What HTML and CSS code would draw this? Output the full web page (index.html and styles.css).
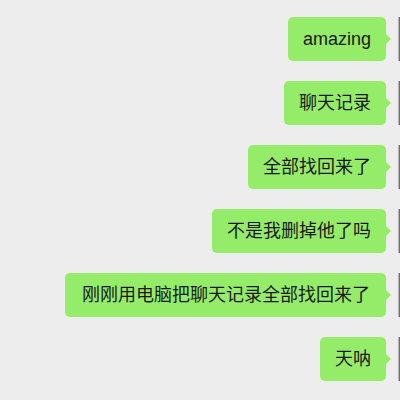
FILE: index.html
```html
<!DOCTYPE html>
<html lang="zh">
<head>
<meta charset="utf-8">
<link rel="stylesheet" href="styles.css">
</head>
<body>
<div class="chat">
  <div class="row"><div class="bubble">amazing</div><div class="avatar"></div></div>
  <div class="row"><div class="bubble">聊天记录</div><div class="avatar"></div></div>
  <div class="row"><div class="bubble">全部找回来了</div><div class="avatar"></div></div>
  <div class="row"><div class="bubble">不是我删掉他了吗</div><div class="avatar"></div></div>
  <div class="row"><div class="bubble bubble-long">刚刚用电脑把聊天记录全部找回来了</div><div class="avatar"></div></div>
  <div class="row"><div class="bubble">天呐</div><div class="avatar"></div></div>
</div>
</body>
</html>
```

FILE: styles.css
```css
html, body {
  margin: 0;
  padding: 0;
  background: #ededed;
  width: 400px;
  height: 400px;
  overflow: hidden;
}
.chat {
  display: flex;
  flex-direction: column;
  gap: 20px;
  padding-top: 17px;
  font-family: "Liberation Sans", "Noto Sans CJK SC", sans-serif;
}
.row {
  display: flex;
  justify-content: flex-end;
  align-items: flex-start;
  height: 44px;
}
.bubble {
  position: relative;
  flex-shrink: 0;
  height: 44px;
  line-height: 44px;
  padding: 0 15px;
  margin-right: 12px;
  background: #95ec69;
  border-radius: 5px;
  color: #191919;
  font-size: 18px;
  white-space: nowrap;
}
.bubble-long {
  padding: 0 16px 0 17px;
}
.bubble::after {
  content: "";
  position: absolute;
  right: -5px;
  top: 16px;
  border-style: solid;
  border-width: 6px 0 6px 6px;
  border-color: transparent transparent transparent #95ec69;
}
.avatar {
  flex-shrink: 0;
  width: 2px;
  height: 44px;
  background: linear-gradient(to right, #b8b8b8 0, #b8b8b8 1px, #6f6f6f 1px);
}
```
